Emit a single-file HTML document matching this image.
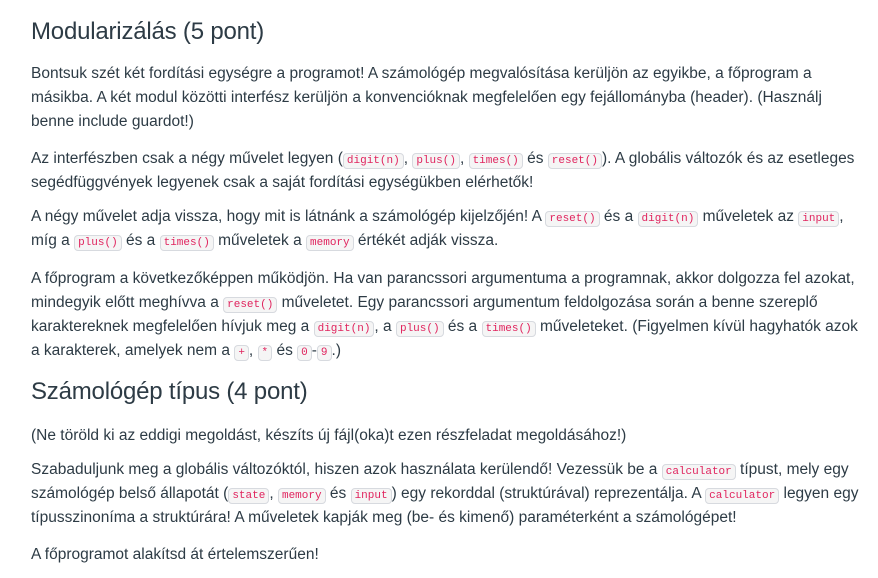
<!DOCTYPE html>
<html><head><meta charset="utf-8"><style>
body{margin:0;background:#fff;color:#2d3b45;font-family:"Liberation Sans",sans-serif;width:878px;height:578px;overflow:hidden}
.w{position:absolute;left:31px;top:0;width:840px}
h2{font-weight:400;font-size:24px;margin:0;position:absolute;left:0;white-space:nowrap;letter-spacing:-0.2px}
.l{position:absolute;left:0;font-size:15.5px;white-space:nowrap;letter-spacing:0;line-height:20px}
code{font-family:"Liberation Mono",monospace;font-size:11px;color:#e0245e;background:#f5f5f5;border:1px solid #d7dadf;border-radius:4px;padding:1px 3px;letter-spacing:0}
</style></head><body><div class="w">
<h2 style="top:18px">Modularizálás (5 pont)</h2>
<div class="l" style="top:64px">Bontsuk szét két fordítási egységre a programot! A számológép megvalósítása kerüljön az egyikbe, a főprogram a</div>
<div class="l" style="top:88px">másikba. A két modul közötti interfész kerüljön a konvencióknak megfelelően egy fejállományba (header). (Használj</div>
<div class="l" style="top:112px">benne include guardot!)</div>
<div class="l" style="top:149px">Az interfészben csak a négy művelet legyen (<code>digit(n)</code>, <code>plus()</code>, <code>times()</code> és <code>reset()</code>). A globális változók és az esetleges</div>
<div class="l" style="top:173px">segédfüggvények legyenek csak a saját fordítási egységükben elérhetők!</div>
<div class="l" style="top:207px">A négy művelet adja vissza, hogy mit is látnánk a számológép kijelzőjén! A <code>reset()</code> és a <code>digit(n)</code> műveletek az <code>input</code>,</div>
<div class="l" style="top:231px">míg a <code>plus()</code> és a <code>times()</code> műveletek a <code>memory</code> értékét adják vissza.</div>
<div class="l" style="top:269px">A főprogram a következőképpen működjön. Ha van parancssori argumentuma a programnak, akkor dolgozza fel azokat,</div>
<div class="l" style="top:293px">mindegyik előtt meghívva a <code>reset()</code> műveletet. Egy parancssori argumentum feldolgozása során a benne szereplő</div>
<div class="l" style="top:317px">karaktereknek megfelelően hívjuk meg a <code>digit(n)</code>, a <code>plus()</code> és a <code>times()</code> műveleteket. (Figyelmen kívül hagyhatók azok</div>
<div class="l" style="top:341px">a karakterek, amelyek nem a <code>+</code>, <code>*</code> és <code>0</code>-<code>9</code>.)</div>
<h2 style="top:378px">Számológép típus (4 pont)</h2>
<div class="l" style="top:426px">(Ne töröld ki az eddigi megoldást, készíts új fájl(oka)t ezen részfeladat megoldásához!)</div>
<div class="l" style="top:460px">Szabaduljunk meg a globális változóktól, hiszen azok használata kerülendő! Vezessük be a <code>calculator</code> típust, mely egy</div>
<div class="l" style="top:484px">számológép belső állapotát (<code>state</code>, <code>memory</code> és <code>input</code>) egy rekorddal (struktúrával) reprezentálja. A <code>calculator</code> legyen egy</div>
<div class="l" style="top:508px">típusszinonímа a struktúrára! A műveletek kapják meg (be- és kimenő) paraméterként a számológépet!</div>
<div class="l" style="top:545px">A főprogramot alakítsd át értelemszerűen!</div>
</div></body></html>
